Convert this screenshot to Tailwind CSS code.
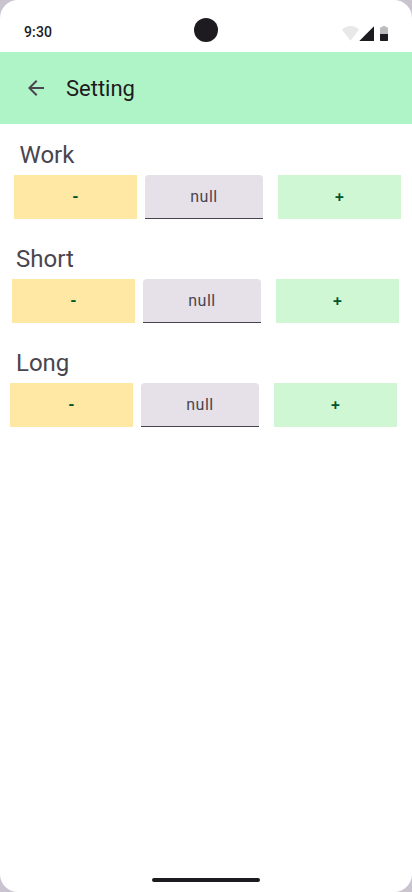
<!DOCTYPE html>
<html lang="en">
<head>
<meta charset="utf-8">
<title>Setting</title>
<script src="https://cdn.jsdelivr.net/npm/@tailwindcss/browser@4"></script>
</head>
<body class="bg-[#cac4d0] font-['Roboto',sans-serif]">
<div class="flex h-[892px] w-[412px] flex-col overflow-hidden rounded-[18px] bg-white">
  <header class="relative flex h-[52px] shrink-0 items-end justify-between pr-6 pb-2.5 pl-6">
    <span class="text-sm leading-5 font-medium tracking-[0.14px] text-[#1d1b20]">9:30</span>
    <div class="absolute top-[18px] left-[194px] size-6 rounded-full bg-[#1d1b20]"></div>
    <svg class="h-[17px] w-[46px]" viewBox="0 0 46 17" fill="#1d1b20">
      <path fill-opacity=".1" d="M8.5 15.700 0 4.800C2.400 2.400 5.400 1.100 8.500 1.100s6.100 1.300 8.500 3.700Z"/>
      <path d="M17.300 16H32V1.200Z"/>
      <path fill-opacity=".3" d="M38 9V3a.7.7 0 0 1 .7-.7h1.800V1h3v1.300h1.800a.7.7 0 0 1 .7.7v6Z"/>
      <path d="M38 9h8v6.300a.7.7 0 0 1-.7.7h-6.600a.7.7 0 0 1-.7-.7Z"/>
    </svg>
  </header>
  <nav class="flex h-[72px] shrink-0 items-center gap-[18px] bg-[#aff4c6] pl-6">
    <svg class="size-6" viewBox="0 0 24 24" fill="#49454f"><path d="M7.825 13 13.425 18.600 12 20 4 12 12 4 13.425 5.400 7.825 11H20V13Z"/></svg>
    <h1 class="pt-0.5 text-[22px] leading-7 text-[#1d1b20]">Setting</h1>
  </nav>
  <main class="flex flex-1 flex-col gap-5 pt-[11px]">
    <section class="pl-3.5">
      <h2 class="h-10 pl-[5.500px] text-2xl leading-10 text-[#49454f]">Work</h2>
      <div class="flex h-11">
        <button class="w-[123px] bg-[#ffe8a3] text-base font-bold text-[#02542d]">-</button>
        <div class="ml-2 flex w-[118px] items-center justify-center rounded-t border-b border-[#49454f] bg-[#e6e0e9] text-base tracking-[0.5px] text-[#49454f]">null</div>
        <button class="ml-[15px] w-[123px] bg-[#cff7d3] pb-0.5 font-['Inter',sans-serif] text-base font-semibold text-[#02542d]">+</button>
      </div>
    </section>
    <section class="pl-3">
      <h2 class="h-10 pl-1 text-2xl leading-10 text-[#49454f]">Short</h2>
      <div class="flex h-11">
        <button class="w-[123px] bg-[#ffe8a3] text-base font-bold text-[#02542d]">-</button>
        <div class="ml-2 flex w-[118px] items-center justify-center rounded-t border-b border-[#49454f] bg-[#e6e0e9] text-base tracking-[0.5px] text-[#49454f]">null</div>
        <button class="ml-[15px] w-[123px] bg-[#cff7d3] pb-0.5 font-['Inter',sans-serif] text-base font-semibold text-[#02542d]">+</button>
      </div>
    </section>
    <section class="pl-2.5">
      <h2 class="h-10 pl-1.5 text-2xl leading-10 text-[#49454f]">Long</h2>
      <div class="flex h-11">
        <button class="w-[123px] bg-[#ffe8a3] text-base font-bold text-[#02542d]">-</button>
        <div class="ml-2 flex w-[118px] items-center justify-center rounded-t border-b border-[#49454f] bg-[#e6e0e9] text-base tracking-[0.5px] text-[#49454f]">null</div>
        <button class="ml-[15px] w-[123px] bg-[#cff7d3] pb-0.5 font-['Inter',sans-serif] text-base font-semibold text-[#02542d]">+</button>
      </div>
    </section>
  </main>
  <footer class="flex h-6 shrink-0 items-center justify-center"><div class="h-1 w-[108px] rounded-full bg-[#1d1b20]"></div></footer>
</div>
</body>
</html>
